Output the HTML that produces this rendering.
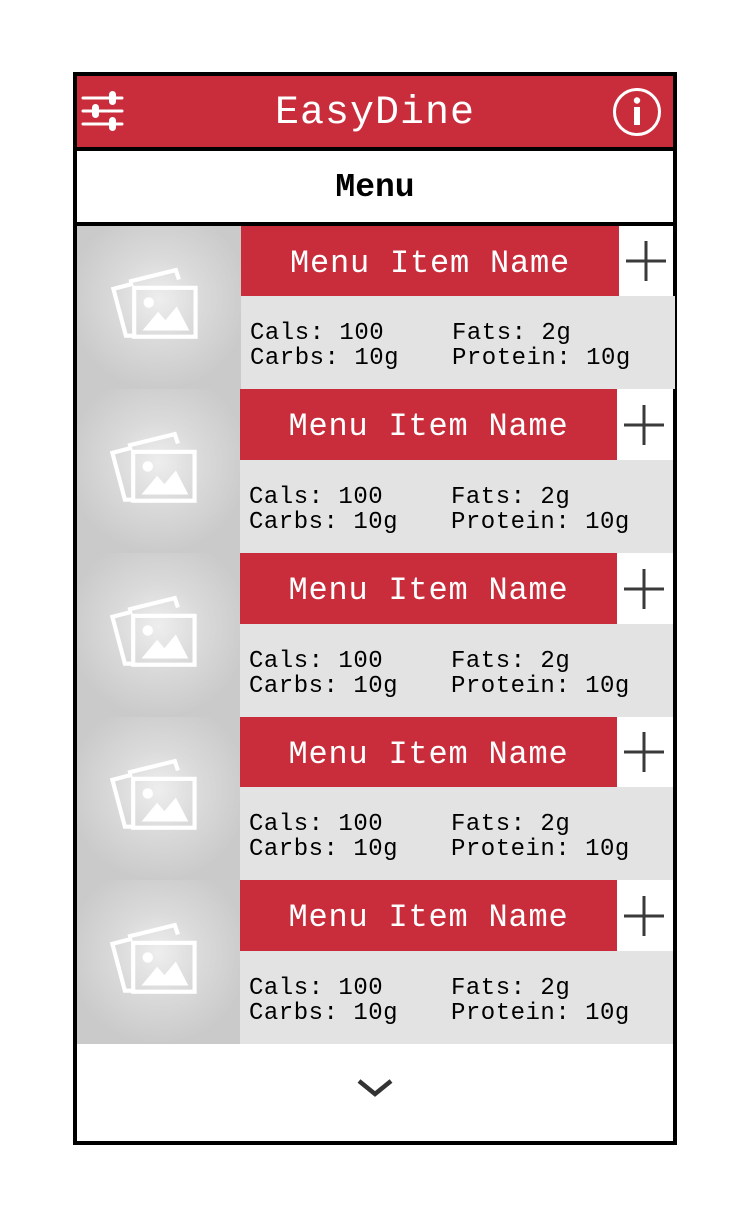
<!DOCTYPE html>
<html><head><style>
body{margin:0;width:750px;height:1219px;background:#fff;position:relative;overflow:hidden;font-family:"Liberation Mono",monospace}
div{position:absolute;box-sizing:border-box}
.red{background:#c92d3b}
.img{background:radial-gradient(circle at 50% 45%,#eeeeee 0,#dadada 35%,#cacaca 75%)}
.name{color:#fff;font-size:32px;text-align:center;line-height:76px;letter-spacing:0.8px}
.stats{background:#e3e3e3;font-size:24px;line-height:25px;color:#000;letter-spacing:0.5px}
.stats span{position:absolute;white-space:pre}
</style></head><body>
<div style="left:73px;top:72px;width:604px;height:1073px;border:4px solid #000"></div>
<div class="red" style="left:77px;top:76px;width:596px;height:71px"></div>
<div style="left:77px;top:147px;width:596px;height:4px;background:#000"></div>
<div style="left:77px;top:222px;width:596px;height:4px;background:#000"></div>
<div style="left:77px;top:91px;width:596px;text-align:center;color:#fff;font-size:40px;line-height:46px;letter-spacing:1px">EasyDine</div>
<div style="left:77px;top:168px;width:596px;text-align:center;font-size:33px;font-weight:bold;line-height:40px">Menu</div>
<svg style="position:absolute;left:80px;top:88px" width="46" height="46" viewBox="0 0 46 46">
<g stroke="#fff" stroke-width="3" stroke-linecap="round" fill="#fff">
<line x1="3" y1="10" x2="42" y2="10"/><line x1="3" y1="23" x2="42" y2="23"/><line x1="3" y1="36" x2="42" y2="36"/>
</g>
<g fill="#fff"><rect x="29" y="3" width="7" height="14" rx="3.5"/><rect x="12" y="16" width="7" height="14" rx="3.5"/><rect x="29" y="29" width="7" height="14" rx="3.5"/></g>
</svg>
<svg style="position:absolute;left:612px;top:87px" width="50" height="50" viewBox="0 0 50 50">
<circle cx="25" cy="25" r="22.5" fill="none" stroke="#fff" stroke-width="3"/>
<circle cx="25" cy="13.5" r="3.2" fill="#fff"/>
<rect x="22" y="20" width="6" height="18" fill="#fff"/>
</svg>

<div class="img" style="left:77px;top:226px;width:164px;height:163px"></div>
<div class="red name" style="left:241px;top:226px;width:378px;height:70px">Menu Item Name</div>
<div class="stats" style="left:241px;top:296px;width:434px;height:93px"><span style="left:9px;top:25px">Cals: 100
Carbs: 10g</span><span style="left:211px;top:25px">Fats: 2g
Protein: 10g</span></div>
<svg style="position:absolute;left:619px;top:233px" width="56" height="56"><path d="M27 8V48M7 28H47" stroke="#3a3a3a" stroke-width="3"/></svg>
<svg style="position:absolute;left:108px;top:266px" width="94" height="78" viewBox="0 0 90 75"><g fill="none" stroke="#fff" stroke-width="4"><path d="M24 17L5 22L17 67L26 67"/><path d="M20 15L65 4L68 13"/><rect x="25" y="21" width="59" height="47"/></g><circle cx="39" cy="35" r="5" fill="#fff"/><path d="M33 62L48 44L55 52L66 39L78 62Z" fill="#fff"/></svg>

<div class="img" style="left:77px;top:389px;width:163px;height:164px"></div>
<div class="red name" style="left:240px;top:389px;width:377px;height:71px">Menu Item Name</div>
<div class="stats" style="left:240px;top:460px;width:433px;height:93px"><span style="left:9px;top:25px">Cals: 100
Carbs: 10g</span><span style="left:211px;top:25px">Fats: 2g
Protein: 10g</span></div>
<svg style="position:absolute;left:617px;top:397px" width="56" height="56"><path d="M27 8V48M7 28H47" stroke="#3a3a3a" stroke-width="3"/></svg>
<svg style="position:absolute;left:107px;top:430px" width="94" height="78" viewBox="0 0 90 75"><g fill="none" stroke="#fff" stroke-width="4"><path d="M24 17L5 22L17 67L26 67"/><path d="M20 15L65 4L68 13"/><rect x="25" y="21" width="59" height="47"/></g><circle cx="39" cy="35" r="5" fill="#fff"/><path d="M33 62L48 44L55 52L66 39L78 62Z" fill="#fff"/></svg>

<div class="img" style="left:77px;top:553px;width:163px;height:164px"></div>
<div class="red name" style="left:240px;top:553px;width:377px;height:71px">Menu Item Name</div>
<div class="stats" style="left:240px;top:624px;width:433px;height:93px"><span style="left:9px;top:25px">Cals: 100
Carbs: 10g</span><span style="left:211px;top:25px">Fats: 2g
Protein: 10g</span></div>
<svg style="position:absolute;left:617px;top:561px" width="56" height="56"><path d="M27 8V48M7 28H47" stroke="#3a3a3a" stroke-width="3"/></svg>
<svg style="position:absolute;left:107px;top:594px" width="94" height="78" viewBox="0 0 90 75"><g fill="none" stroke="#fff" stroke-width="4"><path d="M24 17L5 22L17 67L26 67"/><path d="M20 15L65 4L68 13"/><rect x="25" y="21" width="59" height="47"/></g><circle cx="39" cy="35" r="5" fill="#fff"/><path d="M33 62L48 44L55 52L66 39L78 62Z" fill="#fff"/></svg>

<div class="img" style="left:77px;top:717px;width:163px;height:163px"></div>
<div class="red name" style="left:240px;top:717px;width:377px;height:70px">Menu Item Name</div>
<div class="stats" style="left:240px;top:787px;width:433px;height:93px"><span style="left:9px;top:25px">Cals: 100
Carbs: 10g</span><span style="left:211px;top:25px">Fats: 2g
Protein: 10g</span></div>
<svg style="position:absolute;left:617px;top:724px" width="56" height="56"><path d="M27 8V48M7 28H47" stroke="#3a3a3a" stroke-width="3"/></svg>
<svg style="position:absolute;left:107px;top:757px" width="94" height="78" viewBox="0 0 90 75"><g fill="none" stroke="#fff" stroke-width="4"><path d="M24 17L5 22L17 67L26 67"/><path d="M20 15L65 4L68 13"/><rect x="25" y="21" width="59" height="47"/></g><circle cx="39" cy="35" r="5" fill="#fff"/><path d="M33 62L48 44L55 52L66 39L78 62Z" fill="#fff"/></svg>

<div class="img" style="left:77px;top:880px;width:163px;height:164px"></div>
<div class="red name" style="left:240px;top:880px;width:377px;height:71px">Menu Item Name</div>
<div class="stats" style="left:240px;top:951px;width:433px;height:93px"><span style="left:9px;top:25px">Cals: 100
Carbs: 10g</span><span style="left:211px;top:25px">Fats: 2g
Protein: 10g</span></div>
<svg style="position:absolute;left:617px;top:888px" width="56" height="56"><path d="M27 8V48M7 28H47" stroke="#3a3a3a" stroke-width="3"/></svg>
<svg style="position:absolute;left:107px;top:921px" width="94" height="78" viewBox="0 0 90 75"><g fill="none" stroke="#fff" stroke-width="4"><path d="M24 17L5 22L17 67L26 67"/><path d="M20 15L65 4L68 13"/><rect x="25" y="21" width="59" height="47"/></g><circle cx="39" cy="35" r="5" fill="#fff"/><path d="M33 62L48 44L55 52L66 39L78 62Z" fill="#fff"/></svg>

<svg style="position:absolute;left:355px;top:1075px" width="40" height="26"><path d="M4 6L20 19L36 6" fill="none" stroke="#333" stroke-width="4.5"/></svg>
</body></html>
